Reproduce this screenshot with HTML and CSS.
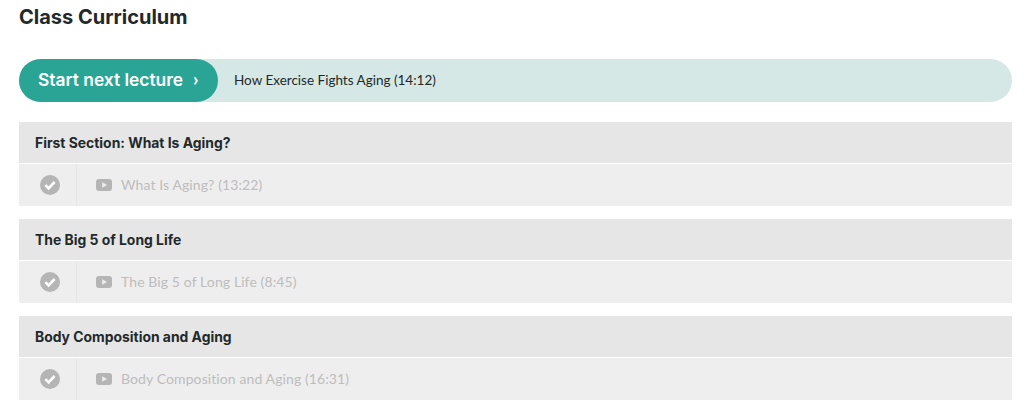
FILE: index.html
```html
<!DOCTYPE html>
<html lang="en">
<head>
  <meta charset="UTF-8" />
  <title>Class Curriculum</title>
  <link rel="stylesheet" href="styles.css">
</head>
<body>

  <main>
    <h2>Class Curriculum</h2>

    <!-- Next lecture -->
    <div class="next-lecture">
      <a class="next-btn" href="#"><span class="next-label">Start next lecture</span><span class="next-arrow">›</span></a>
      <span class="next-title">How Exercise Fights Aging (14:12)</span>
    </div>

    <!-- Sections -->
    <section class="section">
      <h3 class="section-title">First Section: What Is Aging?</h3>
      <div class="lecture">
        <div class="lecture-check">
          <svg viewBox="0 0 20 20" width="20" height="20"><circle cx="10" cy="10" r="10" fill="#b5b5b5"/><path d="M5.4 10.2l3.2 3.2 6-6.4" fill="none" stroke="#fff" stroke-width="2.6"/></svg>
        </div>
        <div class="lecture-name">
          <svg viewBox="0 0 16 12" width="16" height="12"><rect width="16" height="12" rx="3" fill="#b5b5b5"/><path d="M6.2 3.2l4.8 2.8-4.8 2.8z" fill="#eeeeee"/></svg>
          <span>What Is Aging? (13:22)</span>
        </div>
      </div>
    </section>

    <section class="section">
      <h3 class="section-title">The Big 5 of Long Life</h3>
      <div class="lecture">
        <div class="lecture-check">
          <svg viewBox="0 0 20 20" width="20" height="20"><circle cx="10" cy="10" r="10" fill="#b5b5b5"/><path d="M5.4 10.2l3.2 3.2 6-6.4" fill="none" stroke="#fff" stroke-width="2.6"/></svg>
        </div>
        <div class="lecture-name">
          <svg viewBox="0 0 16 12" width="16" height="12"><rect width="16" height="12" rx="3" fill="#b5b5b5"/><path d="M6.2 3.2l4.8 2.8-4.8 2.8z" fill="#eeeeee"/></svg>
          <span>The Big 5 of Long Life (8:45)</span>
        </div>
      </div>
    </section>

    <section class="section">
      <h3 class="section-title">Body Composition and Aging</h3>
      <div class="lecture">
        <div class="lecture-check">
          <svg viewBox="0 0 20 20" width="20" height="20"><circle cx="10" cy="10" r="10" fill="#b5b5b5"/><path d="M5.4 10.2l3.2 3.2 6-6.4" fill="none" stroke="#fff" stroke-width="2.6"/></svg>
        </div>
        <div class="lecture-name">
          <svg viewBox="0 0 16 12" width="16" height="12"><rect width="16" height="12" rx="3" fill="#b5b5b5"/><path d="M6.2 3.2l4.8 2.8-4.8 2.8z" fill="#eeeeee"/></svg>
          <span>Body Composition and Aging (16:31)</span>
        </div>
      </div>
    </section>
  </main>

</body>
</html>
```

FILE: styles.css
```css
/* General Styles */
html, body {
  height: 100%;
  overflow: hidden;
}

body {
  margin: 0;
  font-family: Lato, "Liberation Sans", sans-serif;
  background: #fff;
  color: #23292b;
}

main {
  width: 993px;
  margin-left: 19px;
  padding-top: 5px;
}

h2 {
  font-family: Inter, Lato, sans-serif;
  font-size: 20px;
  line-height: 24px;
  font-weight: 700;
  margin: 0 0 30px;
}

/* Next lecture bar */
.next-lecture {
  display: flex;
  align-items: center;
  height: 43px;
  margin-bottom: 20px;
  background: #d6e8e6;
  border-radius: 22px;
}

.next-btn {
  display: flex;
  align-items: center;
  box-sizing: border-box;
  width: 199px;
  height: 43px;
  padding-left: 19px;
  background: #2aa595;
  border-radius: 22px;
  color: #fff;
  font-family: Inter, Lato, sans-serif;
  font-size: 17.4px;
  font-weight: 600;
  text-decoration: none;
}

.next-label {
  margin-top: -2px;
}

.next-arrow {
  margin-left: 10px;
  margin-top: -4px;
  font-family: Lato, sans-serif;
  font-size: 19px;
  font-weight: 700;
}

.next-title {
  margin-left: 16px;
  margin-top: -2px;
  font-size: 13.5px;
}

/* Curriculum sections */
.section {
  margin-bottom: 13px;
}

.section-title {
  height: 41px;
  margin: 0 0 1px;
  padding-left: 16px;
  background: #e6e6e6;
  font-family: Inter, Lato, sans-serif;
  font-size: 13.9px;
  line-height: 42px;
  font-weight: 700;
}

.lecture {
  display: flex;
  height: 42px;
  background: #eeeeee;
}

.lecture-check {
  display: flex;
  align-items: center;
  box-sizing: border-box;
  width: 58px;
  padding-left: 21px;
  border-right: 1px solid #e6e6e6;
}

.lecture-name {
  display: flex;
  align-items: center;
  gap: 9px;
  padding-left: 19px;
  font-size: 14px;
  letter-spacing: 0.1px;
  color: #bdbdbd;
}

.lecture-name span {
  margin-top: -2px;
}
```
